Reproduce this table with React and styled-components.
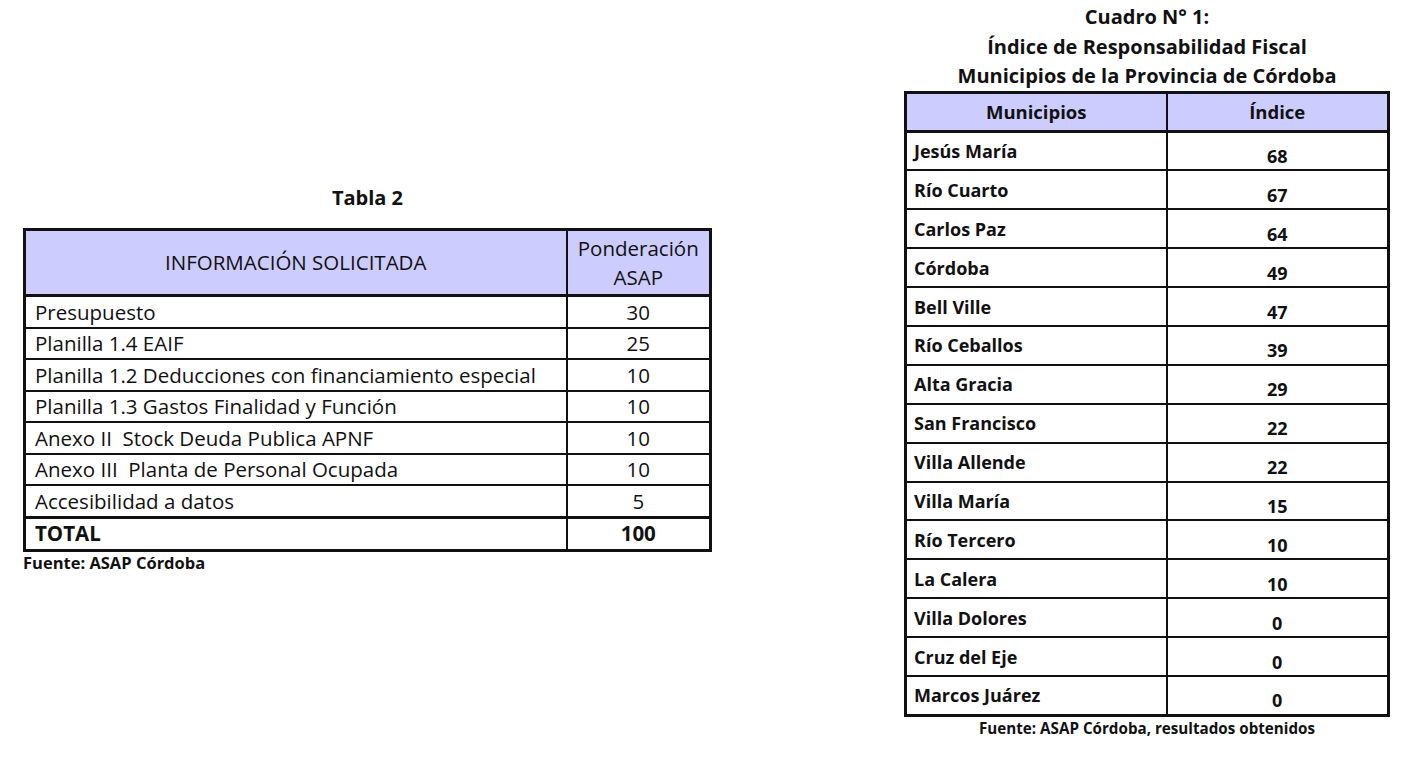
import React from 'react';
import styled, { createGlobalStyle } from 'styled-components';

const GlobalStyle = createGlobalStyle`
  body {
    margin: 0;
    background: #ffffff;
    font-family: 'Open Sans', 'Liberation Sans', sans-serif;
    color: #111111;
  }
`;

const Page = styled.div`
  display: flex;
  align-items: flex-start;
  width: 1417px;
  height: 757px;
  padding-left: 23px;
  box-sizing: border-box;
`;

const LeftBlock = styled.section`
  width: 689px;
  padding-top: 185px;
`;

const RightBlock = styled.section`
  width: 486px;
  margin-left: 192px;
  padding-top: 2px;
`;

const Caption = styled.div`
  font-weight: 700;
  font-size: ${(p) => p.size || 18}px;
  line-height: ${(p) => p.lh || 24}px;
  text-align: center;
  white-space: nowrap;
  margin-bottom: ${(p) => p.gap || 0}px;
`;

const Table = styled.table`
  border-collapse: collapse;
  width: 100%;
  border: 3px solid #111;
  table-layout: fixed;
`;

const HeadCell = styled.th`
  background: #ccccff;
  border: 2px solid #111;
  border-bottom-width: 3px;
  font-weight: ${(p) => (p.bold ? 700 : 400)};
  font-size: ${(p) => p.size}px;
  line-height: ${(p) => p.lh}px;
  height: ${(p) => p.h}px;
  padding: 0;
  text-align: center;
  vertical-align: middle;
  white-space: nowrap;
`;

const Cell = styled.td`
  border: 2px solid #111;
  border-top-width: ${(p) => (p.thickTop ? 3 : 2)}px;
  font-weight: ${(p) => (p.bold ? 700 : 400)};
  font-size: ${(p) => p.size}px;
  height: ${(p) => p.h}px;
  padding: ${(p) => p.pad || '0'};
  text-align: ${(p) => (p.num ? 'center' : 'left')};
  vertical-align: middle;
  white-space: nowrap;
  line-height: 1;
`;

const Source = styled.div`
  font-weight: 700;
  font-size: ${(p) => p.size || 16}px;
  line-height: 22px;
  text-align: ${(p) => (p.center ? 'center' : 'left')};
  white-space: nowrap;
`;

const info = [
  ['Presupuesto', 30],
  ['Planilla 1.4 EAIF', 25],
  ['Planilla 1.2 Deducciones con financiamiento especial', 10],
  ['Planilla 1.3 Gastos Finalidad y Función', 10],
  ['Anexo II\u00a0 Stock Deuda Publica APNF', 10],
  ['Anexo III\u00a0 Planta de Personal Ocupada', 10],
  ['Accesibilidad a datos', 5],
];

const municipios = [
  ['Jesús María', 68],
  ['Río Cuarto', 67],
  ['Carlos Paz', 64],
  ['Córdoba', 49],
  ['Bell Ville', 47],
  ['Río Ceballos', 39],
  ['Alta Gracia', 29],
  ['San Francisco', 22],
  ['Villa Allende', 22],
  ['Villa María', 15],
  ['Río Tercero', 10],
  ['La Calera', 10],
  ['Villa Dolores', 0],
  ['Cruz del Eje', 0],
  ['Marcos Juárez', 0],
];

export default function App() {
  return (
    <>
      <GlobalStyle />
      <Page>
        <LeftBlock>
          <Caption size={20} lh={26} gap={17}>Tabla 2</Caption>
          <Table>
            <colgroup>
              <col style={{ width: 542 }} />
              <col />
            </colgroup>
            <thead>
              <tr>
                <HeadCell size={20.5} lh={29} h={63}>INFORMACIÓN SOLICITADA</HeadCell>
                <HeadCell size={20.5} lh={29} h={63}>Ponderación<br />ASAP</HeadCell>
              </tr>
            </thead>
            <tbody>
              {info.map(([label, value]) => (
                <tr key={label}>
                  <Cell size={20.5} h={29.5} pad="0 0 0 9px">{label}</Cell>
                  <Cell size={20.5} h={29.5} num>{value}</Cell>
                </tr>
              ))}
              <tr>
                <Cell size={20.5} h={30} pad="0 0 0 9px" bold thickTop>TOTAL</Cell>
                <Cell size={20.5} h={30} num bold thickTop>100</Cell>
              </tr>
            </tbody>
          </Table>
          <Source size={16.5}>Fuente: ASAP Córdoba</Source>
        </LeftBlock>

        <RightBlock>
          <Caption size={20} lh={29.5}>Cuadro N° 1:</Caption>
          <Caption size={20} lh={29.5}>Índice de Responsabilidad Fiscal</Caption>
          <Caption size={20} lh={29.5}>Municipios de la Provincia de Córdoba</Caption>
          <Table>
            <colgroup>
              <col style={{ width: 261 }} />
              <col />
            </colgroup>
            <thead>
              <tr>
                <HeadCell bold size={18.5} lh={24} h={36}>Municipios</HeadCell>
                <HeadCell bold size={18.5} lh={24} h={36}>Índice</HeadCell>
              </tr>
            </thead>
            <tbody>
              {municipios.map(([name, idx]) => (
                <tr key={name}>
                  <Cell bold size={18} h={36.9} pad="0 0 0 7px">{name}</Cell>
                  <Cell bold size={18} h={26.9} num pad="10px 0 0 0">{idx}</Cell>
                </tr>
              ))}
            </tbody>
          </Table>
          <Source center size={15.2}>Fuente: ASAP Córdoba, resultados obtenidos</Source>
        </RightBlock>
      </Page>
    </>
  );
}
